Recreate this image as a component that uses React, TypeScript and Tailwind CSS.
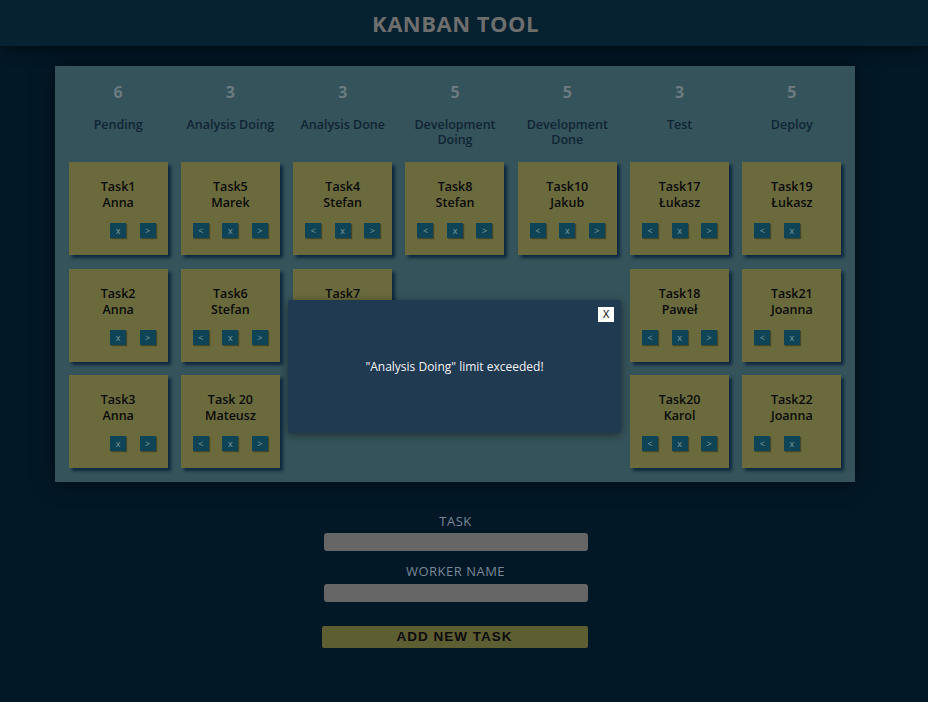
import React from "react";

type Task = { name: string; worker: string };
type Column = { title: string; limit: number; tasks: Task[] };

const columns: Column[] = [
  { title: "Pending", limit: 6, tasks: [
    { name: "Task1", worker: "Anna" },
    { name: "Task2", worker: "Anna" },
    { name: "Task3", worker: "Anna" },
  ] },
  { title: "Analysis Doing", limit: 3, tasks: [
    { name: "Task5", worker: "Marek" },
    { name: "Task6", worker: "Stefan" },
    { name: "Task 20", worker: "Mateusz" },
  ] },
  { title: "Analysis Done", limit: 3, tasks: [
    { name: "Task4", worker: "Stefan" },
    { name: "Task7", worker: "Stefan" },
  ] },
  { title: "Development Doing", limit: 5, tasks: [
    { name: "Task8", worker: "Stefan" },
  ] },
  { title: "Development Done", limit: 5, tasks: [
    { name: "Task10", worker: "Jakub" },
  ] },
  { title: "Test", limit: 3, tasks: [
    { name: "Task17", worker: "Łukasz" },
    { name: "Task18", worker: "Paweł" },
    { name: "Task20", worker: "Karol" },
  ] },
  { title: "Deploy", limit: 5, tasks: [
    { name: "Task19", worker: "Łukasz" },
    { name: "Task21", worker: "Joanna" },
    { name: "Task22", worker: "Joanna" },
  ] },
];

function SmallBtn({ label, hidden }: { label: string; hidden?: boolean }) {
  return (
    <div
      className={
        "w-[16px] h-[15px] bg-[#0e4455] text-[#7f9aa0] text-[9px] leading-[15px] text-center shadow-[1px_1px_1px_rgba(0,0,0,0.35)] " +
        (hidden ? "invisible" : "")
      }
    >
      {label}
    </div>
  );
}

function Card({ task, first, last }: { task: Task; first: boolean; last: boolean }) {
  return (
    <div className="w-[99px] h-[93px] mx-auto bg-[#6a6a3c] shadow-[3px_3px_3px_rgba(10,35,60,0.9)] flex flex-col items-center pt-[17px]">
      <div className="text-[12.5px] leading-[16px] font-semibold text-[#0a0a0a]">{task.name}</div>
      <div className="text-[12.5px] leading-[16px] font-semibold text-[#0a0a0a]">{task.worker}</div>
      <div className="mt-[12px] flex gap-[13.5px]">
        <SmallBtn label="<" hidden={first} />
        <SmallBtn label="x" />
        <SmallBtn label=">" hidden={last} />
      </div>
    </div>
  );
}

export default function App() {
  return (
    <div className="min-h-[702px] bg-[#031827] font-['Open_Sans','Noto_Sans',sans-serif]">
      <header className="h-[46px] bg-[#06212f] shadow-[0_4px_14px_rgba(0,0,0,0.45)] relative z-10">
        <div className="w-[911px] h-full flex items-center justify-center">
          <h1 className="text-[22px] font-bold tracking-[0.5px] text-[#6e6e6e]">KANBAN TOOL</h1>
        </div>
      </header>
      <div className="w-[911px]">
        <div className="relative ml-[55px] mt-[20px] w-[800px] h-[416px] bg-[#35535a] shadow-[0_0_18px_rgba(0,0,0,0.55)] px-[7px]">
          <div className="grid grid-cols-7">
            {columns.map((col, ci) => (
              <div key={col.title} className="flex flex-col">
                <div className="h-[96px] pt-[16px] flex flex-col items-center">
                  <div className="text-[16px] leading-[20px] font-bold text-[#6b7c80]">{col.limit}</div>
                  <div className="mt-[15px] text-[12.5px] leading-[15px] font-semibold text-[#102436] text-center px-[8px]">
                    {col.title}
                  </div>
                </div>
                <div className="flex flex-col gap-[13.5px]">
                  {col.tasks.map((t) => (
                    <Card key={t.name + t.worker} task={t} first={ci === 0} last={ci === columns.length - 1} />
                  ))}
                </div>
              </div>
            ))}
          </div>

          <div className="absolute left-[233px] top-[234px] w-[333px] h-[133px] bg-[#203a52] shadow-[0_2px_8px_rgba(0,0,0,0.45)] rounded-[2px] flex items-center justify-center">
            <div className="absolute right-[7px] top-[7px] w-[16px] h-[15px] bg-white text-[10px] leading-[15px] text-center text-black font-['Liberation_Sans',sans-serif]">
              X
            </div>
            <div className="text-[12px] text-[#f2f2f2] font-medium">"Analysis Doing" limit exceeded!</div>
          </div>
        </div>

        <div className="flex flex-col items-center mt-[31px]">
          <div className="text-[13px] leading-[16px] tracking-[0.5px] text-[#7a8896]">TASK</div>
          <div className="mt-[4px] w-[264px] h-[18px] rounded-[3px] bg-[#666666]" />
          <div className="mt-[12px] text-[13px] leading-[16px] tracking-[0.5px] text-[#7a8896]">WORKER NAME</div>
          <div className="mt-[5px] w-[264px] h-[18px] rounded-[3px] bg-[#666666]" />
          <div className="mt-[24px] -translate-x-[1px] w-[266px] h-[22px] rounded-[2px] bg-[#5e5e33] flex items-center justify-center text-[13.5px] tracking-[1px] text-[#0c0c0c] font-['Liberation_Sans',sans-serif] font-bold">
            ADD NEW TASK
          </div>
        </div>
      </div>
    </div>
  );
}
